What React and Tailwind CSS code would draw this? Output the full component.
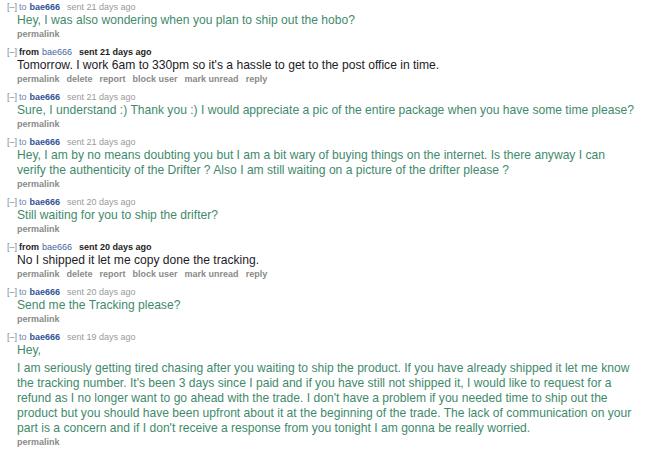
const messages = [
  { dir: 'to', when: '21 days ago', lines: [['Hey, I was also wondering when you plan to ship out the hobo?']] },
  { dir: 'from', when: '21 days ago', lines: [["Tomorrow. I work 6am to 330pm so it's a hassle to get to the post office in time."]] },
  { dir: 'to', when: '21 days ago', lines: [['Sure, I understand :) Thank you :) I would appreciate a pic of the entire package when you have some time please?']] },
  {
    dir: 'to',
    when: '21 days ago',
    lines: [[
      'Hey, I am by no means doubting you but I am a bit wary of buying things on the internet. Is there anyway I can',
      'verify the authenticity of the Drifter ? Also I am still waiting on a picture of the drifter please ?',
    ]],
  },
  { dir: 'to', when: '20 days ago', lines: [['Still waiting for you to ship the drifter?']] },
  { dir: 'from', when: '20 days ago', lines: [['No I shipped it let me copy done the tracking.']] },
  { dir: 'to', when: '20 days ago', lines: [['Send me the Tracking please?']] },
  {
    dir: 'to',
    when: '19 days ago',
    lines: [
      ['Hey,'],
      [
        'I am seriously getting tired chasing after you waiting to ship the product. If you have already shipped it let me know',
        "the tracking number. It's been 3 days since I paid and if you have still not shipped it, I would like to request for a",
        "refund as I no longer want to go ahead with the trade. I don't have a problem if you needed time to ship out the",
        'product but you should have been upfront about it at the beginning of the trade. The lack of communication on your',
        "part is a concern and if I don't receive a response from you tonight I am gonna be really worried.",
      ],
    ],
  },
]

const receivedLinks = ['permalink', 'delete', 'report', 'block user', 'mark unread', 'reply']

function Message({ msg }) {
  const received = msg.dir === 'from'
  return (
    <div className="mb-[6px]">
      <div className="flex items-baseline h-[11px] leading-[11px] text-[9px] whitespace-nowrap">
        <span className="text-[#7a8aa8]">[–]</span>
        {received ? (
          <>
            <span className="ml-[2px] font-bold text-[#222]">from</span>
            <span className="ml-[3px] text-[#4466a0]">bae666</span>
            <span className="ml-[7px] font-bold text-[#222]">sent {msg.when}</span>
          </>
        ) : (
          <>
            <span className="ml-[2px] text-[#6f82a8]">to</span>
            <span className="ml-[3px] font-bold text-[#2f5597]">bae666</span>
            <span className="ml-[7px] text-[#9a9a9a]">sent {msg.when}</span>
          </>
        )}
      </div>
      <div className={`ml-[10px] text-[12.1px] leading-[15px] ${received ? 'text-[#1e1a28]' : 'text-[#3f8a6b]'}`}>
        {msg.lines.map((para, i) => (
          <p key={i} className={`whitespace-nowrap ${i > 0 ? 'mt-[3px]' : ''}`}>
            {para.map((line, j) => (
              <span key={j}>
                {j > 0 && <br />}
                {line}
              </span>
            ))}
          </p>
        ))}
      </div>
      <div className="ml-[10px] flex gap-[7px] h-[13px] leading-[13px] text-[9px] font-bold text-[#8a8a8a] whitespace-nowrap">
        {(received ? receivedLinks : ['permalink']).map(l => (
          <span key={l}>{l}</span>
        ))}
      </div>
    </div>
  )
}

export default function App() {
  return (
    <div
      className="w-[656px] h-[453px] overflow-hidden bg-white pt-[2px] pl-[7px]"
      style={{ fontFamily: '"Liberation Sans", Arial, sans-serif' }}
    >
      {messages.map((m, i) => (
        <Message key={i} msg={m} />
      ))}
    </div>
  )
}
